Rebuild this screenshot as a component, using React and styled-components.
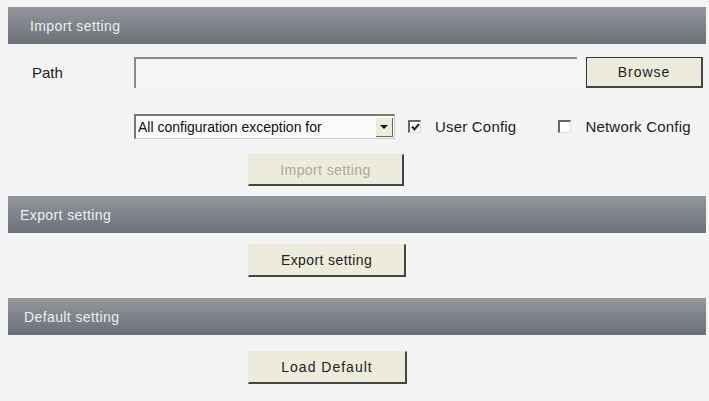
import React from "react";
import styled, { createGlobalStyle } from "styled-components";

const Global = createGlobalStyle`
  html, body {
    margin: 0;
    padding: 0;
    background: #f4f4f4;
    font-family: "Liberation Sans", Arial, sans-serif;
  }
`;

const Page = styled.div`
  width: 709px;
  height: 401px;
  padding: 7px 3px 0 8px;
  box-sizing: border-box;
  background: #f4f4f4;
  overflow: hidden;
`;

const Header = styled.div`
  height: 37px;
  display: flex;
  align-items: center;
  padding-left: ${(p) => p.$indent || 20}px;
  background: linear-gradient(to bottom, #94979c 0%, #7d8188 55%, #6c7179 100%);
  color: #eceef0;
  font-size: 14px;
  letter-spacing: 0.4px;
`;

const Body = styled.div`
  display: flex;
  flex-direction: column;
  padding: ${(p) => p.$pad || "0"};
`;

const Row = styled.div`
  display: flex;
  align-items: center;
  padding-left: ${(p) => p.$indent || 0}px;
  margin-top: ${(p) => p.$top || 0}px;
`;

const Label = styled.div`
  width: 102px;
  font-size: 15px;
  color: #222;
`;

const PathInput = styled.div`
  width: 443px;
  height: 31px;
  box-sizing: border-box;
  border-top: 2px solid #8a8a8a;
  border-left: 2px solid #8a8a8a;
  background: #f6f6f6;
`;

const Button = styled.div`
  width: ${(p) => p.$w || 156}px;
  height: ${(p) => p.$h || 32}px;
  box-sizing: border-box;
  display: flex;
  align-items: center;
  justify-content: center;
  background: #ecebdc;
  font-size: 14px;
  letter-spacing: ${(p) => p.$ls ?? 0.4}px;
  color: ${(p) => (p.$disabled ? "#a9a9a0" : "#222")};
  border: 1px solid ${(p) => (p.$outline ? "#333" : "#e8e8e0")};
  border-right: 2px solid #444;
  border-bottom: 2px solid #444;
  margin-left: ${(p) => p.$ml || 0}px;
`;

const Select = styled.div`
  width: 261px;
  height: 25px;
  box-sizing: border-box;
  display: flex;
  align-items: center;
  border-top: 2px solid #777;
  border-left: 2px solid #777;
  border-right: 1px solid #ccc;
  border-bottom: 1px solid #ccc;
  background: #fafafa;
  font-size: 14px;
  color: #111;
`;

const SelectText = styled.span`
  flex: 1;
  padding-left: 2px;
  white-space: nowrap;
  overflow: hidden;
`;

const Arrow = styled.div`
  width: 17px;
  height: 19px;
  margin-right: 1px;
  display: flex;
  align-items: center;
  justify-content: center;
  background: #ecebdc;
  border-right: 1px solid #666;
  border-bottom: 1px solid #666;
  box-sizing: border-box;
  &::after {
    content: "";
    border-left: 4px solid transparent;
    border-right: 4px solid transparent;
    border-top: 4px solid #111;
  }
`;

const Check = styled.label`
  display: flex;
  align-items: center;
  gap: 14px;
  font-size: 15px;
  color: #222;
  margin-left: ${(p) => p.$ml || 0}px;
  letter-spacing: 0.2px;
`;

const Box = styled.span`
  width: 13px;
  height: 13px;
  box-sizing: border-box;
  border-top: 2px solid #666;
  border-left: 2px solid #666;
  border-right: 1px solid #ddd;
  border-bottom: 1px solid #ddd;
  background: #fff;
  display: flex;
  align-items: center;
  justify-content: center;
`;

function CheckMark() {
  return (
    <svg width="9" height="9" viewBox="0 0 9 9">
      <path d="M1 3.5 L3.5 6.5 L8 1" fill="none" stroke="#222" strokeWidth="2" />
    </svg>
  );
}

export default function App() {
  return (
    <>
      <Global />
      <Page>
        <Header $indent={22}>Import setting</Header>
        <Body $pad="13px 0 10px 0">
          <Row $indent={24}>
            <Label>Path</Label>
            <PathInput />
            <Button $w={117} $h={31} $ml={9} $ls={1} $outline>
              Browse
            </Button>
          </Row>
          <Row $indent={126} $top={26}>
            <Select>
              <SelectText>All configuration exception for</SelectText>
              <Arrow />
            </Select>
            <Check $ml={13}>
              <Box>
                <CheckMark />
              </Box>
              User Config
            </Check>
            <Check $ml={42}>
              <Box />
              Network Config
            </Check>
          </Row>
          <Row $indent={240} $top={15}>
            <Button $disabled>Import setting</Button>
          </Row>
        </Body>
        <Header $indent={12}>Export setting</Header>
        <Body $pad="11px 0 21px 0">
          <Row $indent={240}>
            <Button $w={158} $h={33}>Export setting</Button>
          </Row>
        </Body>
        <Header $indent={16}>Default setting</Header>
        <Body $pad="16px 0 0 0">
          <Row $indent={240}>
            <Button $w={159} $h={33} $ls={1}>Load Default</Button>
          </Row>
        </Body>
      </Page>
    </>
  );
}
